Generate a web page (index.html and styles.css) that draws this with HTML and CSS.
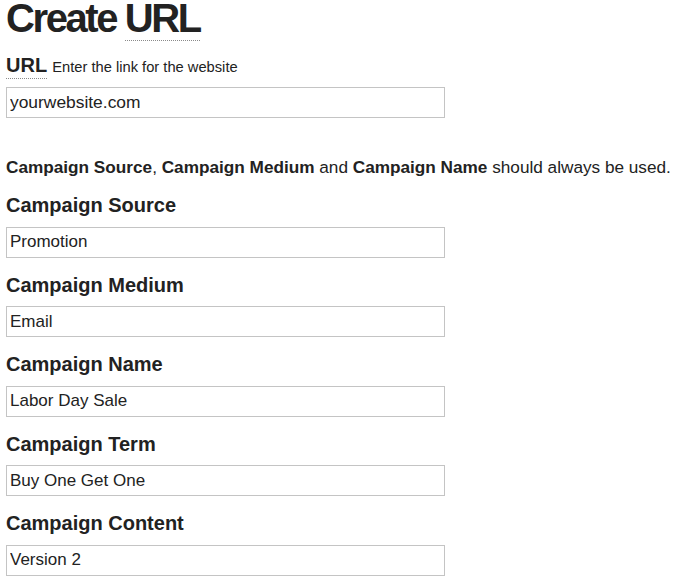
FILE: index.html
```html
<!DOCTYPE html>
<html lang="en">
<head>
<meta charset="utf-8">
<title>Create URL</title>
<link rel="stylesheet" href="styles.css">
</head>
<body>
<main class="page">
  <h1 class="title">Create <abbr class="abbr" title="Uniform Resource Locator">URL</abbr></h1>

  <div class="field field-url">
    <label class="label" for="url"><abbr class="abbr abbr-label" title="Uniform Resource Locator">URL</abbr> <span class="hint">Enter the link for the website</span></label>
    <input class="input" id="url" type="text" value="yourwebsite.com">
  </div>

  <p class="note"><strong>Campaign Source</strong>, <strong>Campaign Medium</strong> and <strong>Campaign Name</strong> should always be used.</p>

  <div class="field">
    <label class="label" for="source">Campaign Source</label>
    <input class="input" id="source" type="text" value="Promotion">
  </div>
  <div class="field">
    <label class="label" for="medium">Campaign Medium</label>
    <input class="input" id="medium" type="text" value="Email">
  </div>
  <div class="field">
    <label class="label" for="name">Campaign Name</label>
    <input class="input" id="name" type="text" value="Labor Day Sale">
  </div>
  <div class="field">
    <label class="label" for="term">Campaign Term</label>
    <input class="input" id="term" type="text" value="Buy One Get One">
  </div>
  <div class="field">
    <label class="label" for="content">Campaign Content</label>
    <input class="input" id="content" type="text" value="Version 2">
  </div>
</main>
</body>
</html>
```

FILE: styles.css
```css
html, body {
  margin: 0;
  padding: 0;
  background: #ffffff;
}

body {
  font-family: "Liberation Sans", Arial, Helvetica, sans-serif;
  color: #222222;
}

.page {
  padding: 0 6px;
}

.title {
  margin: 0;
  font-size: 40px;
  line-height: 37px;
  font-weight: bold;
  letter-spacing: -2.4px;
  color: #222222;
}

.abbr {
  text-decoration: none;
  border-bottom: 1px dotted #8a8a8a;
}

.abbr-label {
  padding-bottom: 2px;
}

.field {
  display: flex;
  flex-direction: column;
  align-items: flex-start;
  margin-bottom: 15px;
}

.field-url {
  margin-top: 16px;
  margin-bottom: 39.6px;
}

.label {
  display: block;
  font-size: 20px;
  line-height: 24px;
  font-weight: bold;
  color: #222222;
  margin-bottom: 9.6px;
}

.hint {
  font-size: 14.7px;
  line-height: 1;
  font-weight: normal;
  color: #222222;
}

.input {
  box-sizing: border-box;
  width: 439px;
  height: 31px;
  margin: 0;
  padding: 0 3px;
  border: 1px solid #c4c4c4;
  border-radius: 0;
  background: #ffffff;
  font-family: "Liberation Sans", Arial, Helvetica, sans-serif;
  font-size: 17px;
  color: #222222;
  outline: none;
}

.field-url .input {
  font-size: 17.4px;
}

.note {
  margin: 0 0 15.8px 0;
  font-size: 17.2px;
  line-height: 20px;
  color: #222222;
}

.note strong {
  font-weight: bold;
}
```
